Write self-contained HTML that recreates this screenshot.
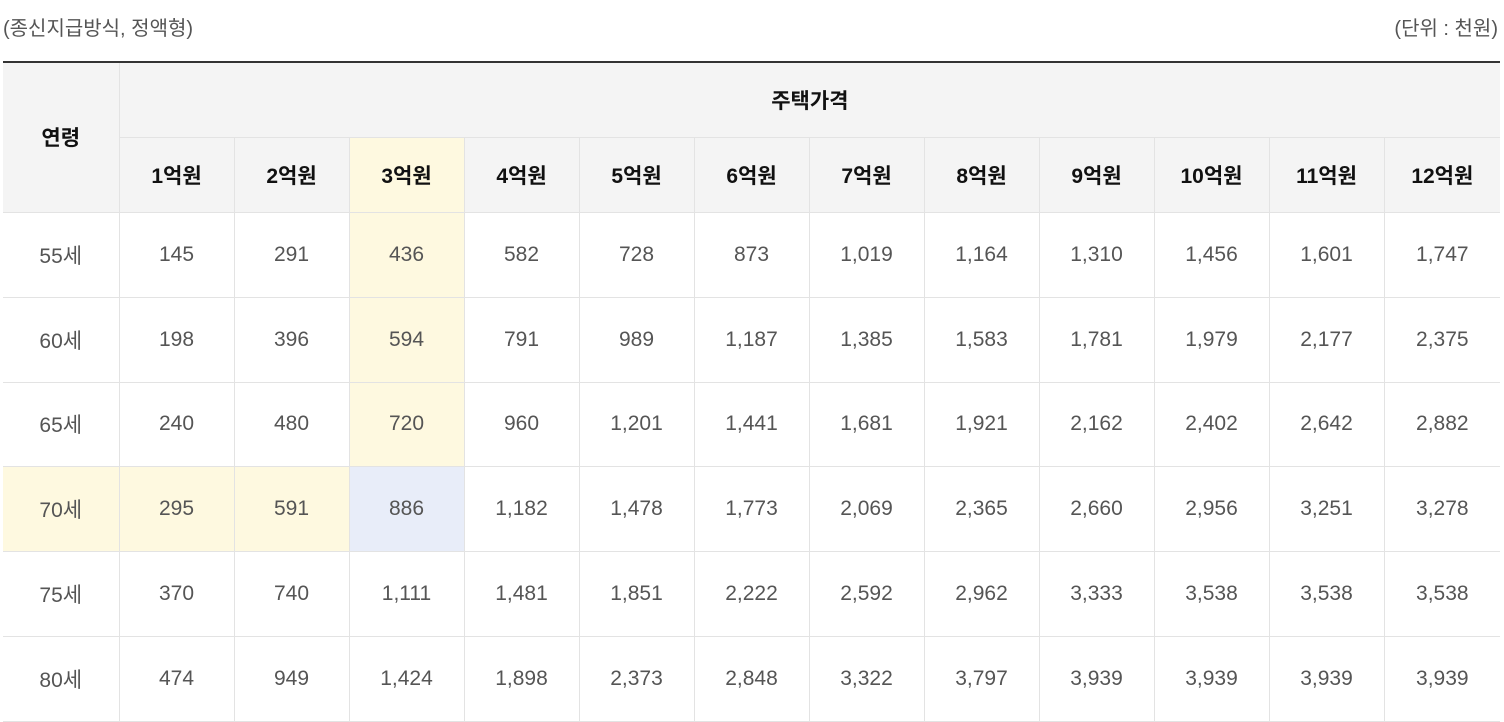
<!DOCTYPE html><html><head><meta charset="utf-8"><style>
body{margin:0;width:1504px;height:714px;overflow:hidden;background:#fff;font-family:"Liberation Sans","Noto Sans CJK KR",sans-serif;position:relative}
.cap{position:absolute;top:12px;font-size:20px;color:#555}
table{position:absolute;left:3px;top:61px;border-collapse:collapse;table-layout:fixed;width:1497px;border-top:2px solid #333}
td,th{border:1px solid #e3e3e3;text-align:center;padding:0;font-size:21px;color:#555;font-weight:normal}
th{background:#f4f4f4;color:#111;font-weight:bold;font-size:21px}
tr td:first-child,tr th:first-child{border-left:none}
tr td:last-child,tr th:last-child{border-right:none}
.y{background:#fef9e0}.b{background:#e8edf9}
</style></head><body>
<div class="cap" style="left:3px">(종신지급방식, 정액형)</div>
<div class="cap" style="right:6px">(단위 : 천원)</div>
<table>
<colgroup><col style="width:116px"><col span="11" style="width:115px"><col style="width:116px"></colgroup>
<tr style="height:75px"><th rowspan="2">연령</th><th colspan="12">주택가격</th></tr>
<tr style="height:75px"><th>1억원</th><th>2억원</th><th class="y">3억원</th><th>4억원</th><th>5억원</th><th>6억원</th><th>7억원</th><th>8억원</th><th>9억원</th><th>10억원</th><th>11억원</th><th>12억원</th></tr>
<tr style="height:85px"><td>55세</td><td>145</td><td>291</td><td class="y">436</td><td>582</td><td>728</td><td>873</td><td>1,019</td><td>1,164</td><td>1,310</td><td>1,456</td><td>1,601</td><td>1,747</td></tr>
<tr style="height:85px"><td>60세</td><td>198</td><td>396</td><td class="y">594</td><td>791</td><td>989</td><td>1,187</td><td>1,385</td><td>1,583</td><td>1,781</td><td>1,979</td><td>2,177</td><td>2,375</td></tr>
<tr style="height:84px"><td>65세</td><td>240</td><td>480</td><td class="y">720</td><td>960</td><td>1,201</td><td>1,441</td><td>1,681</td><td>1,921</td><td>2,162</td><td>2,402</td><td>2,642</td><td>2,882</td></tr>
<tr style="height:85px"><td class="y">70세</td><td class="y">295</td><td class="y">591</td><td class="b">886</td><td>1,182</td><td>1,478</td><td>1,773</td><td>2,069</td><td>2,365</td><td>2,660</td><td>2,956</td><td>3,251</td><td>3,278</td></tr>
<tr style="height:85px"><td>75세</td><td>370</td><td>740</td><td>1,111</td><td>1,481</td><td>1,851</td><td>2,222</td><td>2,592</td><td>2,962</td><td>3,333</td><td>3,538</td><td>3,538</td><td>3,538</td></tr>
<tr style="height:85px"><td>80세</td><td>474</td><td>949</td><td>1,424</td><td>1,898</td><td>2,373</td><td>2,848</td><td>3,322</td><td>3,797</td><td>3,939</td><td>3,939</td><td>3,939</td><td>3,939</td></tr>
</table>
</body></html>
